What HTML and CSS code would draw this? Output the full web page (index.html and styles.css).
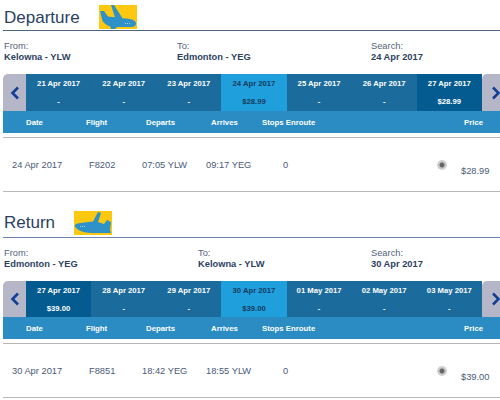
FILE: index.html
```html
<!DOCTYPE html>
<html>
<head>
<meta charset="utf-8">
<title>Flights</title>
<link rel="stylesheet" href="styles.css">
</head>
<body>
<section class="leg leg-out">
  <div class="head">
    <h2 class="title">Departure</h2>
    <svg class="plane" viewBox="0 0 38 24"><rect width="38" height="24" fill="#fdc910"/><path fill="#2e92c8" d="M1 6H5L9 11.500L31 14Q37 15 37 18.500Q37 22 32 22H15Q7 21.500 3.500 16ZM12 0H15L24 14L23 17L16 12.500ZM11 21H19L16 24H12Z"/><path fill="#9fd0e6" d="M26 18h1v1h-1zM28 18h1v1h-1zM30 18h1v1h-1z"/></svg>
  </div>
  <div class="info">
    <div class="info-cell"><span class="label">From:</span><strong class="value">Kelowna - YLW</strong></div>
    <div class="info-cell"><span class="label">To:</span><strong class="value">Edmonton - YEG</strong></div>
    <div class="info-cell"><span class="label">Search:</span><strong class="value">24 Apr 2017</strong></div>
  </div>
  <div class="strip">
    <div class="nav nav-prev"><svg viewBox="0 0 10 16"><path d="M8 2.500L2.500 8L8 13.500" fill="none" stroke="#123f94" stroke-width="2.600"/></svg></div>
    <div class="day"><b>21 Apr 2017</b><b>-</b></div>
    <div class="day"><b>22 Apr 2017</b><b>-</b></div>
    <div class="day"><b>23 Apr 2017</b><b>-</b></div>
    <div class="day day-on"><b>24 Apr 2017</b><b>$28.99</b></div>
    <div class="day"><b>25 Apr 2017</b><b>-</b></div>
    <div class="day"><b>26 Apr 2017</b><b>-</b></div>
    <div class="day day-fare"><b>27 Apr 2017</b><b>$28.99</b></div>
    <div class="nav nav-next"><svg viewBox="0 0 10 16"><path d="M2 2.500L7.500 8L2 13.500" fill="none" stroke="#123f94" stroke-width="2.600"/></svg></div>
  </div>
  <div class="cols">
    <span class="c-date">Date</span><span class="c-flight">Flight</span><span class="c-dep">Departs</span><span class="c-arr">Arrives</span><span class="c-stops">Stops Enroute</span><span class="c-price">Price</span>
  </div>
  <div class="row">
    <span class="r-date">24 Apr 2017</span><span class="r-flight">F8202</span><span class="r-dep">07:05 YLW</span><span class="r-arr">09:17 YEG</span><span class="r-stops">0</span><span class="radio"></span><span class="r-price">$28.99</span>
  </div>
</section>
<section class="leg leg-back">
  <div class="head">
    <h2 class="title">Return</h2>
    <svg class="plane" viewBox="0 0 38 24"><rect width="38" height="24" fill="#fdc910"/><path fill="#2e92c8" d="M0.500 15Q1 12.500 6 12L19 10.500L24 1L27 2L24 11L30 13L33 9L37 11L36 19L37 22H16Q4 21 0.500 15Z"/><path fill="#9fd0e6" d="M6 15h1v1h-1zM8 15h1v1h-1zM10 15h1v1h-1z"/></svg>
  </div>
  <div class="info">
    <div class="info-cell"><span class="label">From:</span><strong class="value">Edmonton - YEG</strong></div>
    <div class="info-cell"><span class="label">To:</span><strong class="value">Kelowna - YLW</strong></div>
    <div class="info-cell"><span class="label">Search:</span><strong class="value">30 Apr 2017</strong></div>
  </div>
  <div class="strip">
    <div class="nav nav-prev"><svg viewBox="0 0 10 16"><path d="M8 2.500L2.500 8L8 13.500" fill="none" stroke="#123f94" stroke-width="2.600"/></svg></div>
    <div class="day day-fare"><b>27 Apr 2017</b><b>$39.00</b></div>
    <div class="day"><b>28 Apr 2017</b><b>-</b></div>
    <div class="day"><b>29 Apr 2017</b><b>-</b></div>
    <div class="day day-on"><b>30 Apr 2017</b><b>$39.00</b></div>
    <div class="day"><b>01 May 2017</b><b>-</b></div>
    <div class="day"><b>02 May 2017</b><b>-</b></div>
    <div class="day"><b>03 May 2017</b><b>-</b></div>
    <div class="nav nav-next"><svg viewBox="0 0 10 16"><path d="M2 2.500L7.500 8L2 13.500" fill="none" stroke="#123f94" stroke-width="2.600"/></svg></div>
  </div>
  <div class="cols">
    <span class="c-date">Date</span><span class="c-flight">Flight</span><span class="c-dep">Departs</span><span class="c-arr">Arrives</span><span class="c-stops">Stops Enroute</span><span class="c-price">Price</span>
  </div>
  <div class="row">
    <span class="r-date">30 Apr 2017</span><span class="r-flight">F8851</span><span class="r-dep">18:42 YEG</span><span class="r-arr">18:55 YLW</span><span class="r-stops">0</span><span class="radio"></span><span class="r-price">$39.00</span>
  </div>
</section>
</body>
</html>
```
FILE: styles.css
```css
* { box-sizing: border-box; }
html, body { margin: 0; padding: 0; }
body {
  width: 500px;
  height: 400px;
  overflow: hidden;
  background: #fff;
  font-family: "Liberation Sans", Arial, sans-serif;
  color: #2d3f5f;
}
.leg { padding-left: 3px; }
.leg-out { padding-top: 5px; height: 206px; }
.leg-back { padding-top: 6px; }

.head {
  display: flex;
  align-items: flex-end;
  gap: 19px;
  height: 26px;
  padding-left: 1px;
  border-bottom: 1px solid #4d6680;
}
.leg-back .head { border-bottom-color: #6d82ad; }
.title {
  margin: 0;
  font-size: 17px;
  font-weight: 400;
  line-height: 24px;
  color: #2a3f62;
}
.plane { display: block; width: 38px; height: 24px; flex: none; margin-bottom: 1px; }
.leg-back .plane { margin-bottom: 2px; }
.leg-back .title { margin-bottom: 2px; }

.info {
  display: grid;
  margin-top: 10px;
  height: 28px;
  padding-left: 1px;
  font-size: 9.300px;
  line-height: 11px;
}
.leg-out .info { grid-template-columns: 173px 194px 1fr; }
.leg-back .info { grid-template-columns: 194px 173px 1fr; }
.info-cell { display: flex; flex-direction: column; }
.label { color: #55637d; }
.value { color: #2d3f5f; }

.strip {
  display: flex;
  height: 37px;
  margin-top: 5px;
}
.leg-back .strip { height: 36px; }
.nav {
  flex: none;
  display: flex;
  align-items: center;
  background: #b6b6c9;
  border-radius: 5px 0 0 0;
}
.nav svg { display: block; flex: none; width: 10px; height: 16px; }
.nav-prev { width: 23px; justify-content: center; }
.nav-next { width: 18px; padding-left: 9px; }
.day {
  flex: 0 0 65.14px;
  display: flex;
  flex-direction: column;
  align-items: center;
  padding-top: 5px;
  gap: 7.500px;
  background: #1b6b9d;
  color: #fff;
  font-size: 7.700px;
  line-height: 10px;
}
.day b { font-weight: 700; }
.day-fare { background: #035b90; }
.day-on { background: #1f9fdc; color: #143c5f; }

.cols {
  display: flex;
  align-items: center;
  height: 22px;
  background: #2a8cc3;
  color: #fff;
  font-size: 7.800px;
  font-weight: 700;
}
.c-date { margin-left: 23px; width: 60px; }
.c-flight { width: 60px; }
.c-dep { width: 65px; }
.c-arr { width: 51px; }
.c-stops { width: 202px; }
.c-price { width: 36px; }

.row {
  display: flex;
  align-items: center;
  height: 55px;
  margin-top: 4px;
  border-top: 1px solid #b5b5bb;
  border-bottom: 1px solid #b9b9bd;
  font-size: 9.300px;
  color: #4a5a76;
}
.r-date { margin-left: 9px; width: 77px; }
.r-flight { width: 53px; }
.r-dep { width: 64px; }
.r-arr { width: 77px; }
.r-stops { width: 154px; }
.radio {
  width: 10px;
  height: 10px;
  flex: none;
  border-radius: 50%;
  background: radial-gradient(circle, #666 0 2px, #c9c9c9 3px, #d4d4d4 5px);
}
.r-price { margin-left: 14px; margin-top: 12px; }
```
